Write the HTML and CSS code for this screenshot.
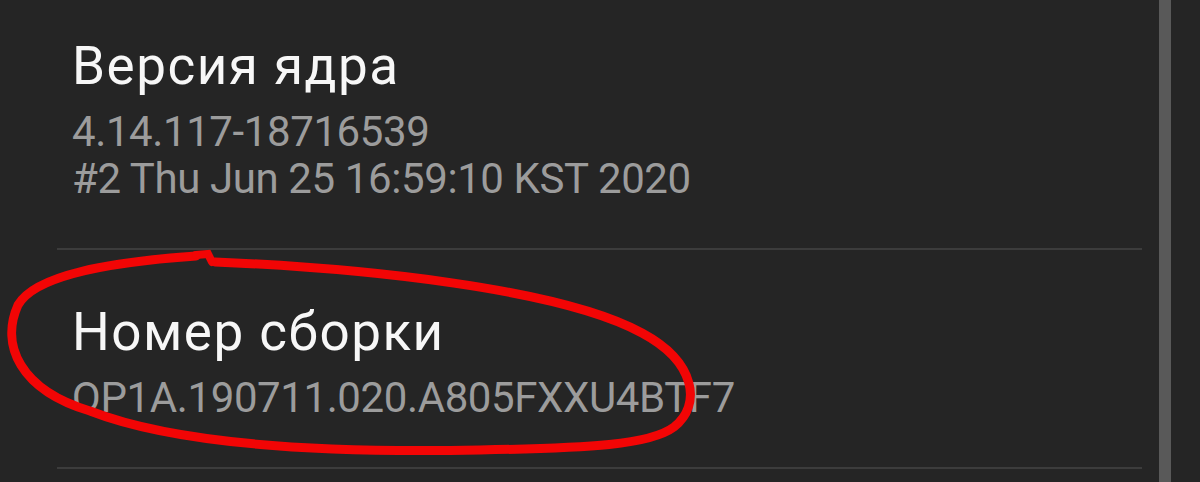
FILE: index.html
```html
<!DOCTYPE html>
<html lang="ru">
<head>
<meta charset="UTF-8">
<title>Сведения о ПО</title>
<link rel="stylesheet" href="styles.css">
</head>
<body>
  <div class="screen">
    <div class="list">
      <div class="item">
        <div class="item-title">Версия ядра</div>
        <div class="item-sub">4.14.117-18716539<br>#2 Thu Jun 25 16:59:10 KST 2020</div>
      </div>
      <div class="item">
        <div class="item-title">Номер сборки</div>
        <div class="item-sub">QP1A.190711.020.A805FXXU4BTF7</div>
      </div>
    </div>
    <div class="scrollbar"></div>
  </div>

  <!-- hand drawn marker circle -->
  <svg class="marker" width="1200" height="482" viewBox="0 0 1200 482">
    <path d="M 215 262 C 360 268, 560 288, 642 333 C 696 362, 702 405, 674 427 C 650 445, 590 448, 480 450 C 330 453, 180 446, 90 411 C 20 390, 0 345, 18 305 C 35 275, 110 262, 196 256" fill="none" stroke="#f20505" stroke-width="9" stroke-linecap="round" stroke-linejoin="round"/>
    <path d="M 196 255 L 208 254 L 212 262" fill="none" stroke="#f20505" stroke-width="8" stroke-linecap="round"/>
  </svg>
</body>
</html>
```

FILE: styles.css
```css
body {
  margin: 0;
  background: #252525;
  font-family: Roboto, "Noto Sans", sans-serif;
  overflow: hidden;
}
.screen {
  display: flex;
  height: 482px;
}
.list {
  width: 1085px;
  margin-left: 57px;
  margin-top: -16px;
}
.item {
  padding: 50px 15px 46px;
  border-bottom: 2px solid #3c3c3c;
}
.item-title {
  color: #f7f7f7;
  font-size: 53px;
  line-height: 64px;
  letter-spacing: 1.5px;
}
.item-sub {
  margin-top: 10px;
  color: #9c9c9c;
  font-size: 42px;
  line-height: 47px;
  letter-spacing: -0.4px;
}
.scrollbar {
  width: 12px;
  margin-left: 17px;
  background: #595959;
}
.marker {
  position: absolute;
  top: 0;
  left: 0;
  pointer-events: none;
}
```
